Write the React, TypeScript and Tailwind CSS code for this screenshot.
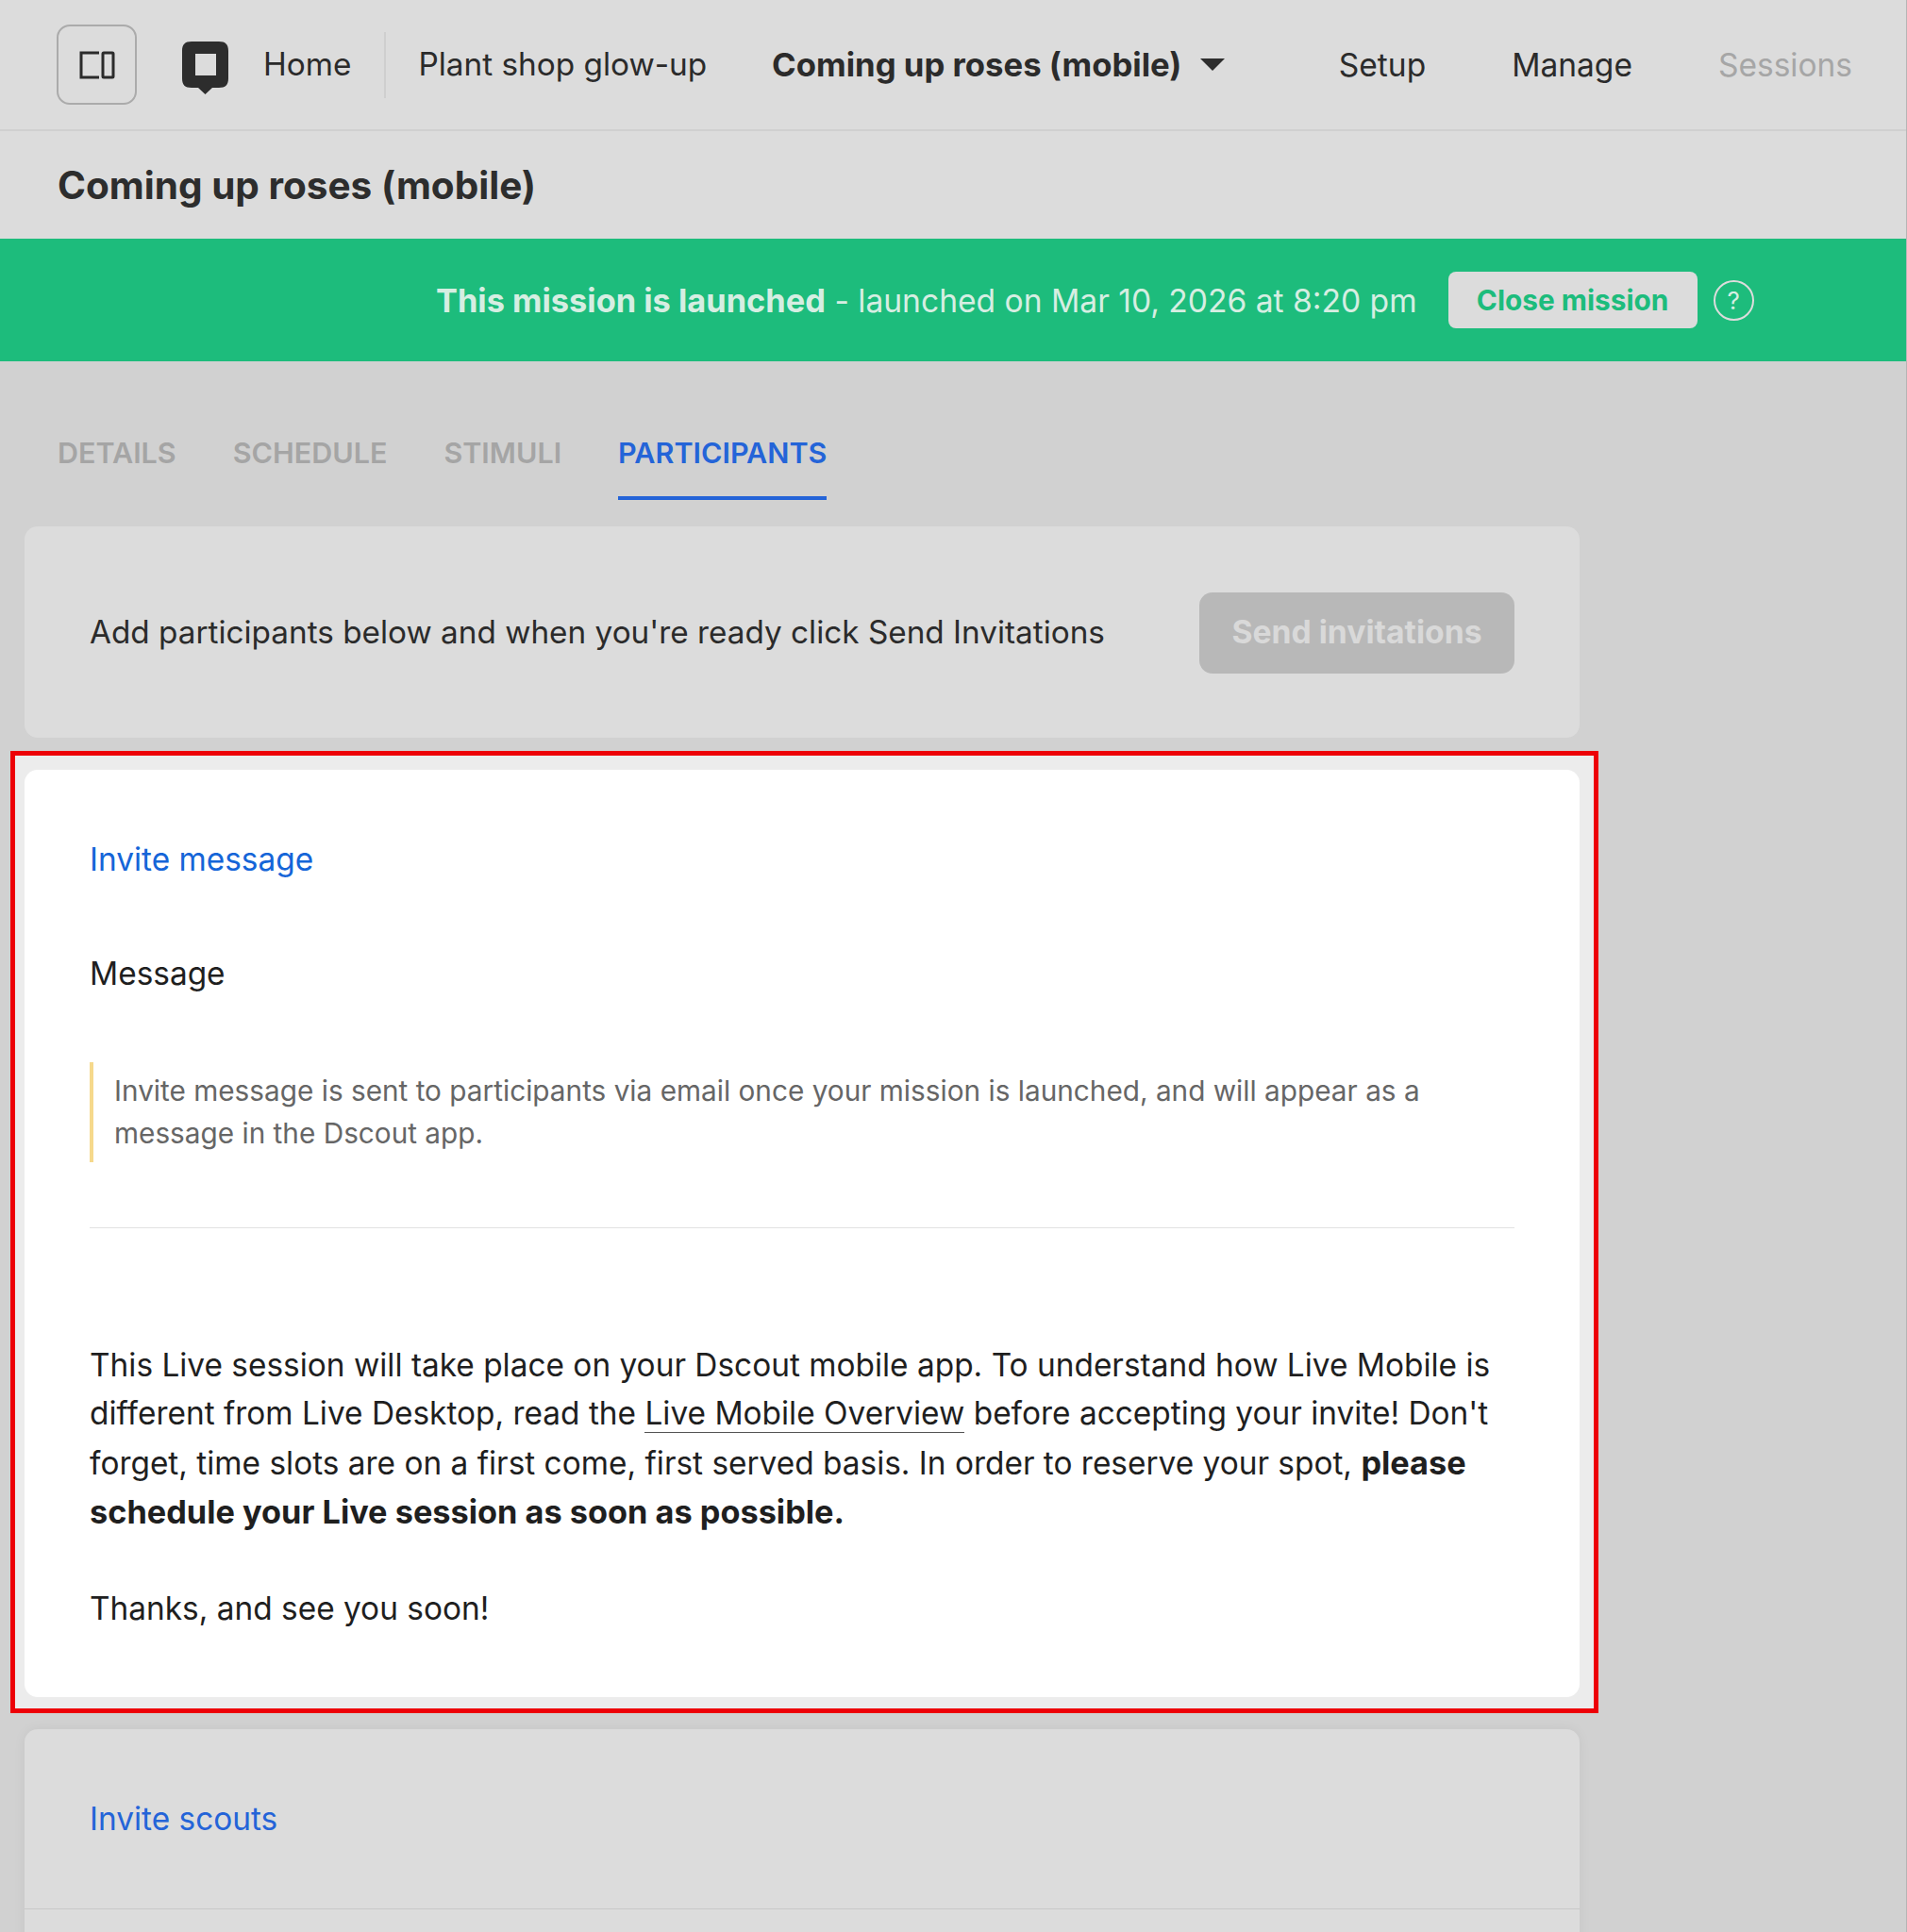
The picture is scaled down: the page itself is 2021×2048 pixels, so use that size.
import React from 'react';

const tabs = ['DETAILS', 'SCHEDULE', 'STIMULI'];

const PanelIcon = () => (
  <svg width="38" height="30" viewBox="0 0 38 30" fill="none" stroke="#2b2b2b" strokeWidth="3">
    <path d="M21 2H2v26h19" />
    <rect x="25" y="2" width="11" height="26" rx="1" />
  </svg>
);

const Logo = () => (
  <svg width="49" height="56" viewBox="0 0 49 56">
    <path fillRule="evenodd" fill="#2d2d2d" d="M10 0h29c7 0 10 3 10 10v29c0 7-3 10-10 10h-7l-7.500 7-7.500-7h-7C3 49 0 46 0 39V10C0 3 3 0 10 0zM14 13v23h22V13z" />
  </svg>
);

export default function App() {
  return (
    <div className="h-[2048px] w-[2021px] overflow-hidden border-r border-[#b5b5b5] bg-[#d1d1d1] font-['Inter',sans-serif] text-[#2b2b2b]">
      {/* top nav */}
      <header className="flex h-[139px] items-center border-b-2 border-[#d0d0d0] bg-[#dcdcdc] pl-[60px] pr-[57px] text-[33.35px]">
        <button className="flex h-[85px] w-[85px] items-center justify-center rounded-[14px] border-2 border-[#ababab]">
          <PanelIcon />
        </button>
        <div className="ml-[48px] mt-[6px]"><Logo /></div>
        <span className="ml-[37px]">Home</span>
        <div className="ml-[35px] h-[70px] w-[2px] bg-[#cfcfcf]" />
        <span className="ml-[34px]">Plant shop glow-up</span>
        <span className="ml-[69px] text-[34.7px] font-bold">Coming up roses (mobile)</span>
        <span className="ml-[20px] h-0 w-0 border-x-[13px] border-t-[13px] border-x-transparent border-t-[#2d2d2d]" />
        <div className="ml-auto flex gap-[91px] pt-[1px] text-[33.5px]">
          <span>Setup</span>
          <span>Manage</span>
          <span className="text-[#a6a6a6]">Sessions</span>
        </div>
      </header>

      <div className="flex h-[114px] items-center bg-[#dcdcdc] pl-[61px] pt-[2px]">
        <h1 className="text-[40.5px] font-bold text-[#2d2d2d]">Coming up roses (mobile)</h1>
      </div>

      {/* launched banner */}
      <div className="flex h-[130px] items-center bg-[#1dbc7c] pl-[462px] text-[33.6px] text-[#d6eee2]">
        <span className="pt-[2px]"><b className="text-[34.4px] font-bold">This mission is launched</b> - launched on Mar 10, 2026 at 8:20 pm</span>
        <button className="ml-[33px] flex h-[60px] w-[264px] items-center justify-center rounded-[8px] bg-[#dcdcdc] text-[29.8px] font-bold text-[#1dbc7c]">
          Close mission
        </button>
        <span className="ml-[17px] flex h-[43px] w-[43px] items-center justify-center rounded-full border-2 border-[#dcdcdc] text-[26px]">?</span>
      </div>

      {/* tabs */}
      <nav className="flex h-[147px] items-end gap-[60px] pl-[61px] text-[30.5px] font-semibold text-[#a5a5a5]">
        {tabs.map(t => (
          <span key={t} className="pb-[27px]">{t}</span>
        ))}
        <span className="border-b-[4px] border-[#2464d8] pb-[23px] text-[#2464d8]">PARTICIPANTS</span>
      </nav>

      <main className="ml-[26px] mt-[28px] w-[1648px]">
        <section className="flex h-[224px] items-center justify-between rounded-[14px] bg-[#dcdcdc] px-[69px] text-[33.3px]">
          <p className="pt-[2px]">Add participants below and when you're ready click Send Invitations</p>
          <button className="mt-[1px] flex h-[86px] w-[334px] items-center justify-center rounded-[14px] bg-[#b8b8b8] text-[33.7px] font-bold text-[#d9d9d9]">
            Send invitations
          </button>
        </section>

        {/* highlighted card */}
        <div className="-ml-[15px] -mr-[20px] mt-[14px] border-[5px] border-[#ed0007] bg-[#ececec] pb-[12px] pl-[10px] pr-[15px] pt-[15px]">
          <section className="h-[983px] rounded-[14px] bg-white px-[69px] pt-[72px] text-[33.4px] text-[#1f1f1f]">
            <h2 className="leading-[46px] text-[#1565d8]">Invite message</h2>
            <h3 className="mt-[75px] leading-[46px]">Message</h3>
            <div className="mt-[71px] border-l-[4px] border-[#f6d98c] pl-[22px] text-[29.75px] leading-[45px] text-[#666666]">
              <p className="py-[8px]">Invite message is sent to participants via email once your mission is launched, and will appear as a<br />message in the Dscout app.</p>
            </div>
            <hr className="mt-[69px] border-[#e2e2e2]" />
            <p className="mt-[120px] leading-[51.3px]">
              This Live session will take place on your Dscout mobile app. To understand how Live Mobile is<br />
              different from Live Desktop, read the <a className="border-b border-[#555555]">Live Mobile Overview</a> before accepting your invite! Don't<br />
              forget, time slots are on a first come, first served basis. In order to reserve your spot, <b className="text-[34.3px] font-bold">please<br />
              schedule your Live session as soon as possible.</b>
            </p>
            <p className="mt-[51px] leading-[51px]">Thanks, and see you soon!</p>
          </section>
        </div>

        <section className="mt-[17px] h-[300px] rounded-[14px] bg-[#dcdcdc] pt-[72px] shadow-[0_0_14px_rgba(0,0,0,0.05)]">
          <h2 className="pl-[69px] text-[33.4px] leading-[46px] text-[#2464d8]">Invite scouts</h2>
          <hr className="mt-[72px] border-[#c9c9c9]" />
        </section>
      </main>
    </div>
  );
}
